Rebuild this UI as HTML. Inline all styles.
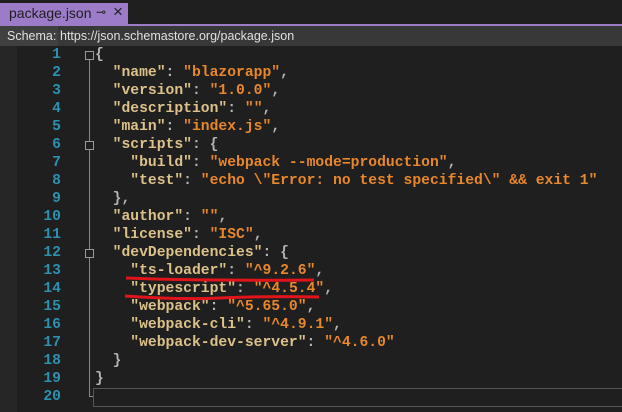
<!DOCTYPE html><html><head><style>
body{margin:0;width:622px;height:412px;background:#1f1f1f;overflow:hidden;position:relative;font-family:"Liberation Sans",sans-serif}
.tab{position:absolute;left:0;top:3px;width:128px;height:21px;background:#9c7cc8;color:#1e1e1e;font-size:14px}
.line{position:absolute;left:0;top:24px;width:622px;height:2px;background:#9c7cc8}
.sch{position:absolute;left:0;top:26px;width:622px;height:20px;background:#404040;color:#e0e0e0;font-size:12.5px}
.url{position:absolute;left:58px;top:0;right:0;height:20px;background:#383838}
.gut{position:absolute;left:0;top:46px;width:17px;height:366px;background:#262626}
pre{margin:0;position:absolute;top:46px;font:bold 14.7px/18px "Liberation Mono",monospace}
.n{left:20px;width:41px;text-align:right;color:#2b91af}
.c{left:95px;color:#b4b4b4}
.k{color:#dcc28a}.s{color:#e8872c}
</style></head><body>
<div class="tab"><span style="position:absolute;left:9px;top:2px">package.json</span><span style="position:absolute;left:96px;top:2px;font-size:12px">⊸</span><span style="position:absolute;left:113px;top:-1px;font-size:17px">×</span></div>
<div class="line"></div>
<div class="sch"><span style="position:absolute;left:7px;top:3px">Schema:</span><div class="url"><span style="position:absolute;left:2px;top:3px">https://json.schemastore.org/package.json</span></div></div>
<div class="gut"></div>
<pre class="n">1
2
3
4
5
6
7
8
9
10
11
12
13
14
15
16
17
18
19
20</pre>
<div style="position:absolute;left:89px;top:55px;width:1px;height:342px;background:#888"></div>
<div style="position:absolute;left:89px;top:396px;width:5px;height:1px;background:#888"></div>
<div style="position:absolute;left:85px;top:51px;width:7px;height:7px;border:1px solid #999;background:#1f1f1f"></div>
<div style="position:absolute;left:85px;top:141px;width:7px;height:7px;border:1px solid #999;background:#1f1f1f"></div>
<div style="position:absolute;left:85px;top:249px;width:7px;height:7px;border:1px solid #999;background:#1f1f1f"></div>
<div style="position:absolute;left:93px;top:388px;width:529px;height:17px;border:1px solid #555;border-right:none"></div>
<pre class="c">{
  <span class="k">"name"</span>: <span class="s">"blazorapp"</span>,
  <span class="k">"version"</span>: <span class="s">"1.0.0"</span>,
  <span class="k">"description"</span>: <span class="s">""</span>,
  <span class="k">"main"</span>: <span class="s">"index.js"</span>,
  <span class="k">"scripts"</span>: {
    <span class="k">"build"</span>: <span class="s">"webpack --mode=production"</span>,
    <span class="k">"test"</span>: <span class="s">"echo \"Error: no test specified\" &amp;&amp; exit 1"</span>
  },
  <span class="k">"author"</span>: <span class="s">""</span>,
  <span class="k">"license"</span>: <span class="s">"ISC"</span>,
  <span class="k">"devDependencies"</span>: {
    <span class="k">"ts-loader"</span>: <span class="s">"^9.2.6"</span>,
    <span class="k">"typescript"</span>: <span class="s">"^4.5.4"</span>,
    <span class="k">"webpack"</span>: <span class="s">"^5.65.0"</span>,
    <span class="k">"webpack-cli"</span>: <span class="s">"^4.9.1"</span>,
    <span class="k">"webpack-dev-server"</span>: <span class="s">"^4.6.0"</span>
  }
}
</pre>
<svg style="position:absolute;left:0;top:0" width="622" height="412"><path d="M126 278 Q200 281 314 280" stroke="#e0141a" stroke-width="3" fill="none"/><path d="M125 296 Q180 300 220 298 Q260 296 319 297" stroke="#e0141a" stroke-width="3" fill="none"/></svg>
</body></html>
